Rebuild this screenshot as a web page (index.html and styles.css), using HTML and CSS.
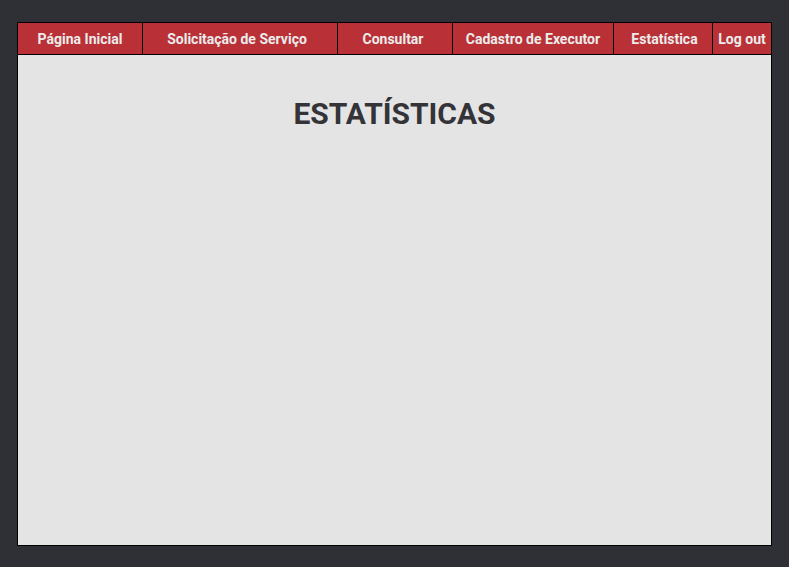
FILE: index.html
```html
<!DOCTYPE html>
<html lang="pt">
<head>
<meta charset="utf-8">
<title>Estatísticas</title>
<link rel="stylesheet" href="styles.css">
</head>
<body>
<div class="frame">
  <nav class="nav">
    <a class="nav-item w1" href="#">Página Inicial</a>
    <a class="nav-item w2" href="#">Solicitação de Serviço</a>
    <a class="nav-item w3" href="#">Consultar</a>
    <a class="nav-item w4" href="#">Cadastro de Executor</a>
    <a class="nav-item w5" href="#">Estatística</a>
    <a class="nav-item w6" href="#">Log out</a>
  </nav>
  <main class="content">
    <h1 class="title">ESTATÍSTICAS</h1>
  </main>
</div>
</body>
</html>
```
FILE: styles.css
```css
html, body {
  margin: 0;
  padding: 0;
  background: #2f3035;
}
body {
  padding: 22px 17px 21px 17px;
  font-family: Roboto, "Liberation Sans", sans-serif;
}
.frame {
  width: 755px;
  height: 524px;
  box-sizing: border-box;
  border: 1px solid #000;
  background: #e4e4e4;
  display: flex;
  flex-direction: column;
}
.nav {
  display: grid;
  grid-template-columns: 125px 195px 115px 161px 99px 1fr;
  height: 32px;
  border-bottom: 1px solid #000;
  background: #b93137;
  box-sizing: border-box;
}
.nav-item {
  display: flex;
  align-items: center;
  justify-content: center;
  color: #ececec;
  font-weight: bold;
  font-size: 14px;
  text-decoration: none;
  border-right: 1px solid #000;
  white-space: nowrap;
}
.w2 { padding-right: 6px; }
.w3 { padding-right: 4px; }
.w5 { padding-left: 3px; }
.w6 { border-right: none; }
.content {
  flex: 1;
  display: flex;
  flex-direction: column;
  align-items: center;
}
.title {
  margin: 41px 0 0 0;
  font-size: 30px;
  font-weight: bold;
  color: #333338;
  line-height: 36px;
}
```
